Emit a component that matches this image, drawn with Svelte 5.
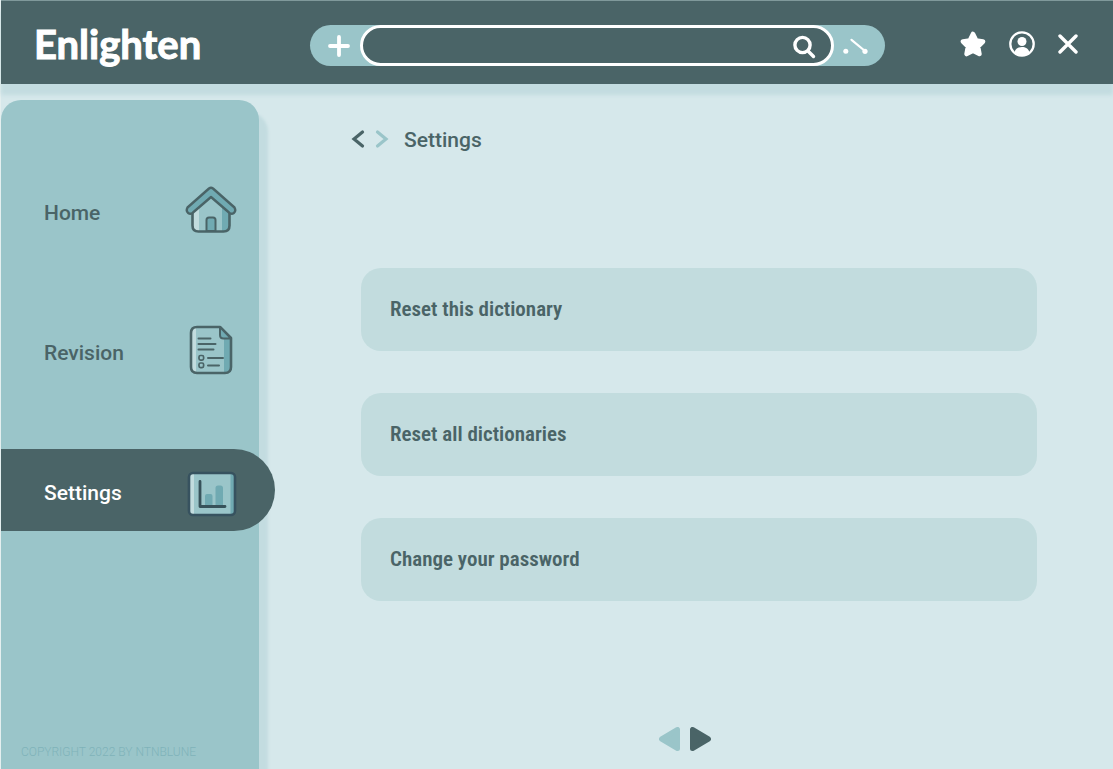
<script lang="ts">
  let active = $state('Settings');
  let query = $state('');
  const sections = ['Home', 'Revision', 'Settings'];
  const actions = ['Reset this dictionary', 'Reset all dictionaries', 'Change your password'];
</script>

<div class="app">
  <header>
    <div class="logo">Enlighten</div>
    <form class="search" onsubmit={(e) => e.preventDefault()}>
      <button type="button" class="add" aria-label="Add">
        <svg width="22" height="22" viewBox="0 0 22 22"><path d="M11 2v18M2 11h18" stroke="#fff" stroke-width="3.8" stroke-linecap="round" /></svg>
      </button>
      <div class="field">
        <input type="text" aria-label="Search" bind:value={query} />
        <button type="submit" aria-label="Search">
          <svg width="26" height="26" viewBox="0 0 26 26" fill="none" stroke="#fff"><circle cx="11.500" cy="12" r="7.6" stroke-width="3.4" /><path d="M17 18l5.500 5.500" stroke-width="3.4" stroke-linecap="round" /></svg>
        </button>
      </div>
      <button type="button" class="tool" aria-label="Match words">
        <svg width="26" height="18" viewBox="0 0 26 18"><circle cx="2.8" cy="14.3" r="2.5" fill="#fff" /><circle cx="22" cy="14.3" r="2.6" fill="#fff" /><path d="M8.500 2.800L22 14" stroke="#fff" stroke-width="2.200" stroke-linecap="round" /></svg>
      </button>
    </form>
    <div class="tools">
      <button aria-label="Favourites">
        <svg width="26" height="26" viewBox="0 0 26 26"><path d="M13 3l3.200 6.500 6.800 1-5 5 1.400 7.500-6.400-3.200L6.600 23 8 15.500l-5-5 6.800-1z" fill="#fff" stroke="#fff" stroke-width="4.600" stroke-linejoin="round" /></svg>
      </button>
      <button aria-label="Account">
        <svg width="26" height="26" viewBox="0 0 26 26"><circle cx="13" cy="13" r="11.700" fill="none" stroke="#fff" stroke-width="2.300" /><circle cx="13" cy="10.500" r="4.500" fill="#fff" /><path d="M5.500 21.500c1-4 4-5.500 7.500-5.500s6.500 1.500 7.500 5.500q-7.500 6-15 0z" fill="#fff" /></svg>
      </button>
      <button aria-label="Close">
        <svg width="20" height="20" viewBox="0 0 20 20"><path d="M2 2l16 16M18 2L2 18" stroke="#fff" stroke-width="3.400" stroke-linecap="round" /></svg>
      </button>
    </div>
  </header>

  <div class="body">
    <aside>
      <nav>
        {#each sections as name}
          <button class="item" class:active={active === name} onclick={() => (active = name)}>
            <span>{name}</span>
            {#if name === 'Home'}
              <svg width="54" height="50" viewBox="1 -1 54 50" stroke-linejoin="round">
                <path d="M9 20L27 6l18 14v20q0 6-6 6H15q-6 0-6-6z" fill="#9ac5c9" />
                <path d="M9 20l6-5v31q-6 0-6-6z" fill="#c2dcde" />
                <path d="M38 14l8 7v19q0 6-8 6z" fill="#70aab2" />
                <path d="M8.500 23v16.500q0 6 6 6h25q6 0 6-6V23" fill="none" stroke="#4a6467" stroke-width="2.600" />
                <path d="M22.500 45V34q0-2.500 2.500-2.500h4q2.500 0 2.500 2.500v11z" fill="#70aab2" stroke="#4a6467" stroke-width="2" />
                <path d="M3.500 21.500L25 2.500q2-1.500 4 0l21.500 19c2.500 5-2.500 8-5.500 5L27 11 9 26.500c-3 3-8 0-5.500-5z" fill="#70aab2" stroke="#4a6467" stroke-width="2.400" />
              </svg>
            {:else if name === 'Revision'}
              <svg width="54" height="50" viewBox="1 0 54 50" fill="none" stroke-linejoin="round" stroke-linecap="round">
                <path d="M13 2h23l11 11v29q0 6-6 6H13q-6 0-6-6V8q0-6 6-6z" fill="#9ac5c9" />
                <path d="M7 8q0-5 5-6v46q-5-1-5-6z" fill="#c2dcde" />
                <path d="M40 13h7v29q0 5-7 6z" fill="#70aab2" />
                <path d="M13 2h23l11 11v29q0 6-6 6H13q-6 0-6-6V8q0-6 6-6z" stroke="#4a6467" stroke-width="2.600" />
                <path d="M36 2v8q0 3.500 3.500 3.500H47z" fill="#70aab2" stroke="#4a6467" stroke-width="2" />
                <path d="M14.500 13.500h12M14.500 19h17M14.500 24.500h15M24 33h15M24 40.500h11" stroke="#4a6467" stroke-width="2" />
                <rect x="15" y="30.500" width="4.600" height="4.600" rx="1.500" stroke="#4a6467" stroke-width="1.700" /><rect x="15" y="38" width="4.600" height="4.600" rx="1.500" stroke="#4a6467" stroke-width="1.700" />
              </svg>
            {:else}
              <svg width="54" height="56" viewBox="1 -6 54 56" stroke-linejoin="round" stroke-linecap="round">
                <rect x="5" y="5" width="46" height="42" rx="4" fill="#9ac5c9" />
                <path d="M5 9q0-4 5-4v42q-5 0-5-4z" fill="#c2dcde" /><path d="M46.500 5q4.500 0 4.500 4v34q0 4-4.500 4z" fill="#70aab2" />
                <rect x="5" y="5" width="46" height="42" rx="4" fill="none" stroke="#37525f" stroke-width="2.600" />
                <path d="M21 38V28q0-2 2-2h3.500q2 0 2 2v10zM31.500 38V20q0-2.500 2.500-2.500h2.500q2.500 0 2.500 2.500v18z" fill="#70aab2" />
                <path d="M16 13.500v25h25" fill="none" stroke="#37525a" stroke-width="2.800" />
              </svg>
            {/if}
          </button>
        {/each}
      </nav>
      <small>COPYRIGHT 2022 BY NTNBLUNE</small>
    </aside>

    <main>
      <div class="crumbs">
        <button aria-label="Back"><svg width="14" height="20" viewBox="0 0 14 20"><path d="M11.500 3L3 10l8.500 7" fill="none" stroke="#4a6467" stroke-width="3.200" stroke-linecap="round" /></svg></button>
        <button aria-label="Forward"><svg width="14" height="20" viewBox="0 0 14 20"><path d="M2.500 3L11 10l-8.500 7" fill="none" stroke="#9ac5c9" stroke-width="3.200" stroke-linecap="round" /></svg></button>
        <h1>{active}</h1>
      </div>
      <div class="cards">
        {#each actions as label}
          <button>{label}</button>
        {/each}
      </div>
      <div class="pager">
        <button aria-label="Previous page"><svg width="22" height="24" viewBox="0 0 22 24"><path d="M2.500 12L18.500 2.500v19z" fill="#9ac5c9" stroke="#9ac5c9" stroke-width="5" stroke-linejoin="round" /></svg></button>
        <button aria-label="Next page"><svg width="22" height="24" viewBox="0 0 22 24"><path d="M19.500 12L3.500 2.500v19z" fill="#4a6467" stroke="#4a6467" stroke-width="5" stroke-linejoin="round" /></svg></button>
      </div>
    </main>
  </div>
</div>

<style>
  :global(body) { margin: 0; background: #d6e8eb; }
  .app {
    box-sizing: border-box;
    min-height: 100vh;
    display: flex;
    flex-direction: column;
    border-left: 1px solid #e4efef;
    background: #d6e8eb;
    color: #4a6467;
    font-family: Roboto, "Liberation Sans", sans-serif;
  }
  button { border: 0; padding: 0; background: none; color: inherit; font: inherit; cursor: pointer; }
  svg { display: block; flex: none; }
  header {
    box-sizing: border-box;
    height: 84px;
    display: flex;
    align-items: center;
    padding: 6px 35px 0 33px;
    border-top: 1px solid #80999b;
    background: #4a6467;
    box-shadow: 0 11px 4px #c3dce0;
  }
  .logo {
    width: 276px;
    flex: none;
    padding-bottom: 4px;
    color: #fff;
    font: 700 40px/48px Lato, "Open Sans", sans-serif;
    -webkit-text-stroke: 1px #fff;
  }
  .search {
    flex: 0 1 575px;
    height: 41px;
    display: flex;
    align-items: center;
    border-radius: 21px;
    background: #9ac5c9;
  }
  .add { width: 50px; display: flex; justify-content: center; padding-left: 8px; box-sizing: border-box; }
  .tool { width: 51px; padding-left: 9px; box-sizing: border-box; }
  .field {
    box-sizing: border-box;
    flex: 1;
    min-width: 0;
    height: 41px;
    display: flex;
    align-items: center;
    padding: 0 14px 0 16px;
    border: 3px solid #fff;
    border-radius: 21px;
    background: #4a6467;
  }
  input { flex: 1; min-width: 0; border: 0; outline: 0; background: none; color: #fff; font: 20px Roboto, sans-serif; }
  .tools { margin-left: auto; display: flex; align-items: center; gap: 23px; padding-bottom: 3px; }
  .body { flex: 1; display: flex; padding-top: 16px; }
  aside {
    box-sizing: border-box;
    width: 258px;
    flex: none;
    display: flex;
    flex-direction: column;
    justify-content: space-between;
    padding: 69px 0 8px;
    border-radius: 20px 20px 0 0;
    background: #9ac5c9;
    box-shadow: 9px 12px 3px #c3dce0;
  }
  nav { display: flex; flex-direction: column; gap: 58px; }
  .item {
    box-sizing: border-box;
    width: calc(100% + 16px);
    height: 82px;
    display: flex;
    align-items: center;
    justify-content: space-between;
    padding: 0 36px 0 43px;
    border-radius: 0 41px 41px 0;
    font-size: 21px;
    font-weight: 500;
  }
  .item span { padding-top: 6px; }
  .item.active { background: #4a6467; color: #fff; }
  small { padding-left: 20px; font-size: 12px; line-height: 18px; font-weight: 300; color: #7fb3b9; }
  main { flex: 1; min-width: 0; display: flex; flex-direction: column; padding: 24px 76px 18px 102px; }
  .crumbs { display: flex; align-items: center; gap: 10px; height: 30px; margin-left: -10px; }
  h1 { margin: 0 0 0 5px; padding-top: 2px; font-size: 21px; font-weight: 500; }
  .cards { display: flex; flex-direction: column; gap: 42px; margin: 114px 0 42px; }
  .cards button {
    height: 83px;
    padding: 0 29px 2px;
    border-radius: 20px;
    background: #c2dcde;
    text-align: left;
    font: 600 21px/32px "Roboto Condensed", "Liberation Sans Narrow", "Liberation Sans", sans-serif;
  }
  .pager { display: flex; justify-content: center; gap: 8px; margin-top: auto; padding-right: 28px; }
</style>
